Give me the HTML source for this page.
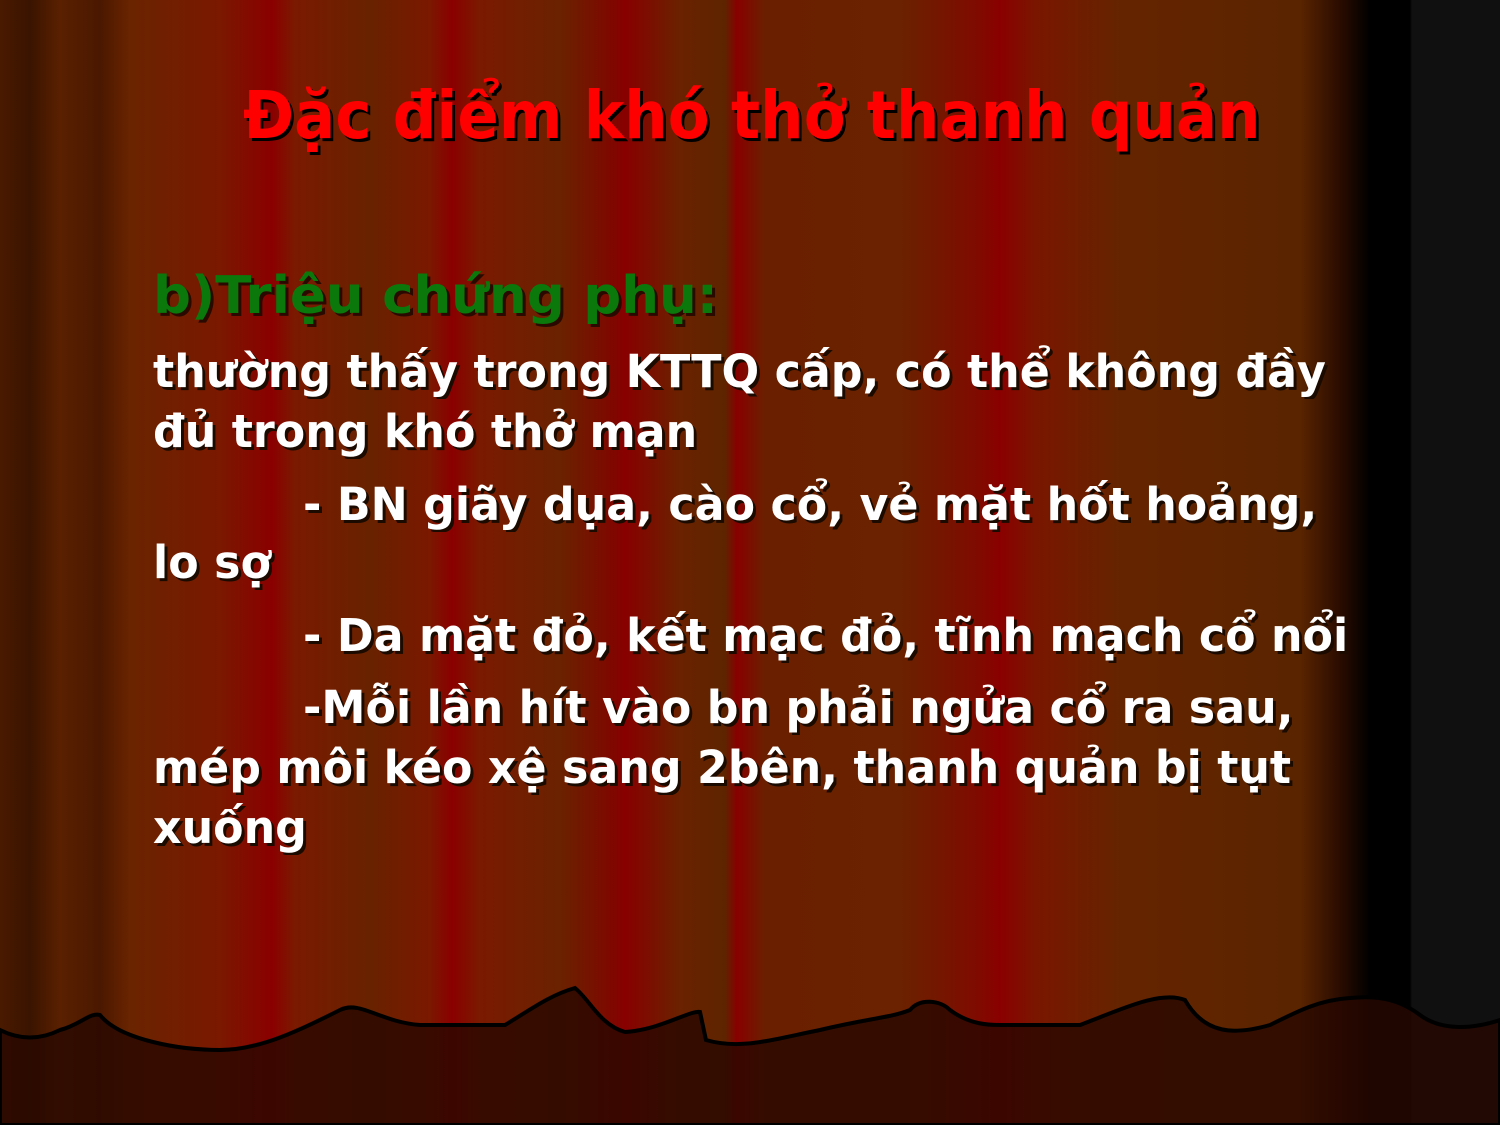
<!DOCTYPE html>
<html><head><meta charset="utf-8"><style>
html,body{margin:0;padding:0}
body{width:1500px;height:1125px;position:relative;overflow:hidden;
background:linear-gradient(90deg,#4a1a00 0px,#3a1400 30px,#5a2000 60px,#4a1800 100px,#6a2400 130px,#7a1800 220px,#8a0000 272px,#7a1a00 295px,#682200 370px,#7a1800 430px,#8a0000 452px,#7a1a00 480px,#6a2200 560px,#800600 615px,#880000 625px,#6a2200 680px,#5e2400 725px,#880000 737px,#6a2000 765px,#6a2200 900px,#800a00 980px,#8a0000 1000px,#7a1600 1035px,#652400 1120px,#5a2400 1300px,#2a0c00 1340px,#000 1370px,#000 1410px,#101010 1412px,#101010 1500px);}
.t{position:absolute;left:0;font-family:"DejaVu Sans","Liberation Sans",sans-serif;font-weight:bold;white-space:nowrap;transform-origin:0 0;}
.title{color:#ff0000;font-size:66px;text-shadow:3px 3px 0 #000;}
.g{color:#0a780a;font-size:52px;text-shadow:3px 3px 0 #2a0a00;}
.w{color:#fff;font-size:45px;text-shadow:3px 3px 0 #1a0a00;}
</style></head><body>
<svg width="1500" height="1125" style="position:absolute;left:0;top:0">
<path d="M0,1030 C20,1040 40,1040 60,1030 C80,1025 90,1012 100,1015 C120,1040 180,1050 220,1050 C260,1050 300,1030 340,1010 C360,1000 380,1022 420,1025 L505,1025 C530,1010 550,995 575,988 C590,1000 600,1025 625,1032 C660,1030 690,1010 700,1012 L706,1040 C740,1050 770,1040 820,1030 C870,1018 890,1018 910,1010 C920,998 940,1000 950,1010 C970,1025 990,1025 1000,1025 L1080,1025 C1120,1010 1160,990 1185,1000 C1205,1035 1235,1035 1270,1025 C1300,1010 1320,1000 1350,998 C1380,995 1400,1000 1420,1015 C1440,1030 1470,1030 1500,1020 L1500,1125 L0,1125 Z" fill="rgba(40,8,0,0.8)" stroke="#000" stroke-width="4"/>
</svg>
<div class="t title" style="top:77px;left:243px;transform:scaleX(0.925)">Đặc điểm khó thở thanh quản</div>
<div class="t g" style="top:266px;left:153px;transform:scaleX(1.02)">b)Triệu chứng phụ:</div>
<div class="t w" style="top:345px;left:153px;transform:scaleX(0.985)">thường thấy trong KTTQ cấp, có thể không đầy</div>
<div class="t w" style="top:405px;left:153px;transform:scaleX(0.985)">đủ trong khó thở mạn</div>
<div class="t w" style="top:478px;left:303px;transform:scaleX(0.985)">- BN giãy dụa, cào cổ, vẻ mặt hốt hoảng,</div>
<div class="t w" style="top:536px;left:153px;transform:scaleX(0.985)">lo sợ</div>
<div class="t w" style="top:609px;left:303px;transform:scaleX(0.985)">- Da mặt đỏ, kết mạc đỏ, tĩnh mạch cổ nổi</div>
<div class="t w" style="top:681px;left:303px;transform:scaleX(0.985)">-Mỗi lần hít vào bn phải ngửa cổ ra sau,</div>
<div class="t w" style="top:741px;left:153px;transform:scaleX(0.985)">mép môi kéo xệ sang 2bên, thanh quản bị tụt</div>
<div class="t w" style="top:801px;left:153px;transform:scaleX(0.985)">xuống</div>
</body></html>
